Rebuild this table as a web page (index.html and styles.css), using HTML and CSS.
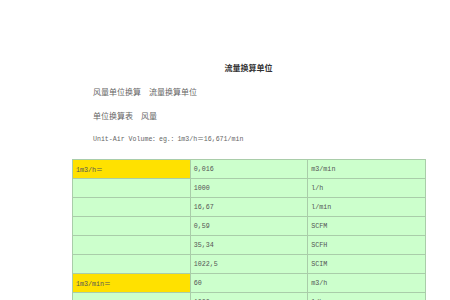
FILE: index.html
```html
<!DOCTYPE html>
<html lang="zh">
<head>
<meta charset="utf-8">
<title>流量换算单位</title>
<link rel="stylesheet" href="styles.css">
</head>
<body>
<div class="page">
  <h1 class="title">流量换算单位</h1>
  <p class="line">风量单位换算　流量换算单位</p>
  <p class="line">单位换算表　风量</p>
  <p class="line latin">Unit-Air Volume：eg.：1m3/h＝16,671/min</p>
  <table class="conv">
    <tr><td class="key">1m3/h＝</td><td>0,016</td><td>m3/min</td></tr>
    <tr><td></td><td>1000</td><td>l/h</td></tr>
    <tr><td></td><td>16,67</td><td>l/min</td></tr>
    <tr><td></td><td>0,59</td><td>SCFM</td></tr>
    <tr><td></td><td>35,34</td><td>SCFH</td></tr>
    <tr><td></td><td>1022,5</td><td>SCIM</td></tr>
    <tr><td class="key">1m3/min＝</td><td>60</td><td>m3/h</td></tr>
    <tr><td></td><td>1000</td><td>l/h</td></tr>
  </table>
</div>
</body>
</html>
```
FILE: styles.css
```css
html, body {
  margin: 0;
  padding: 0;
  background: #ffffff;
}

body {
  font-family: "Noto Sans CJK SC", "Liberation Serif", serif;
  color: #555555;
  overflow: hidden;
}

.page {
  width: 353px;
  padding: 62px 0 0 72px;
}

.title {
  margin: 0;
  font-size: 8px;
  line-height: 12px;
  font-weight: bold;
  text-align: center;
  color: #333333;
}

.line {
  margin: 12px 0 0 0;
  padding-left: 21px;
  font-size: 8px;
  line-height: 12px;
  color: #666666;
}

.latin {
  font-family: "Liberation Mono", "Noto Sans CJK SC", monospace;
  font-size: 6.6px;
}

.conv {
  margin-top: 13px;
  width: 354px;
  border-collapse: collapse;
  table-layout: fixed;
  background: #ccffcc;
  font-family: "Liberation Mono", "Noto Sans CJK SC", monospace;
  font-size: 6.7px;
  color: #555555;
}

.conv td {
  height: 18px;
  padding: 0 3px;
  border: 1px solid #a9cda9;
  vertical-align: middle;
  white-space: nowrap;
}

.conv .key {
  background: #ffe100;
}
```
